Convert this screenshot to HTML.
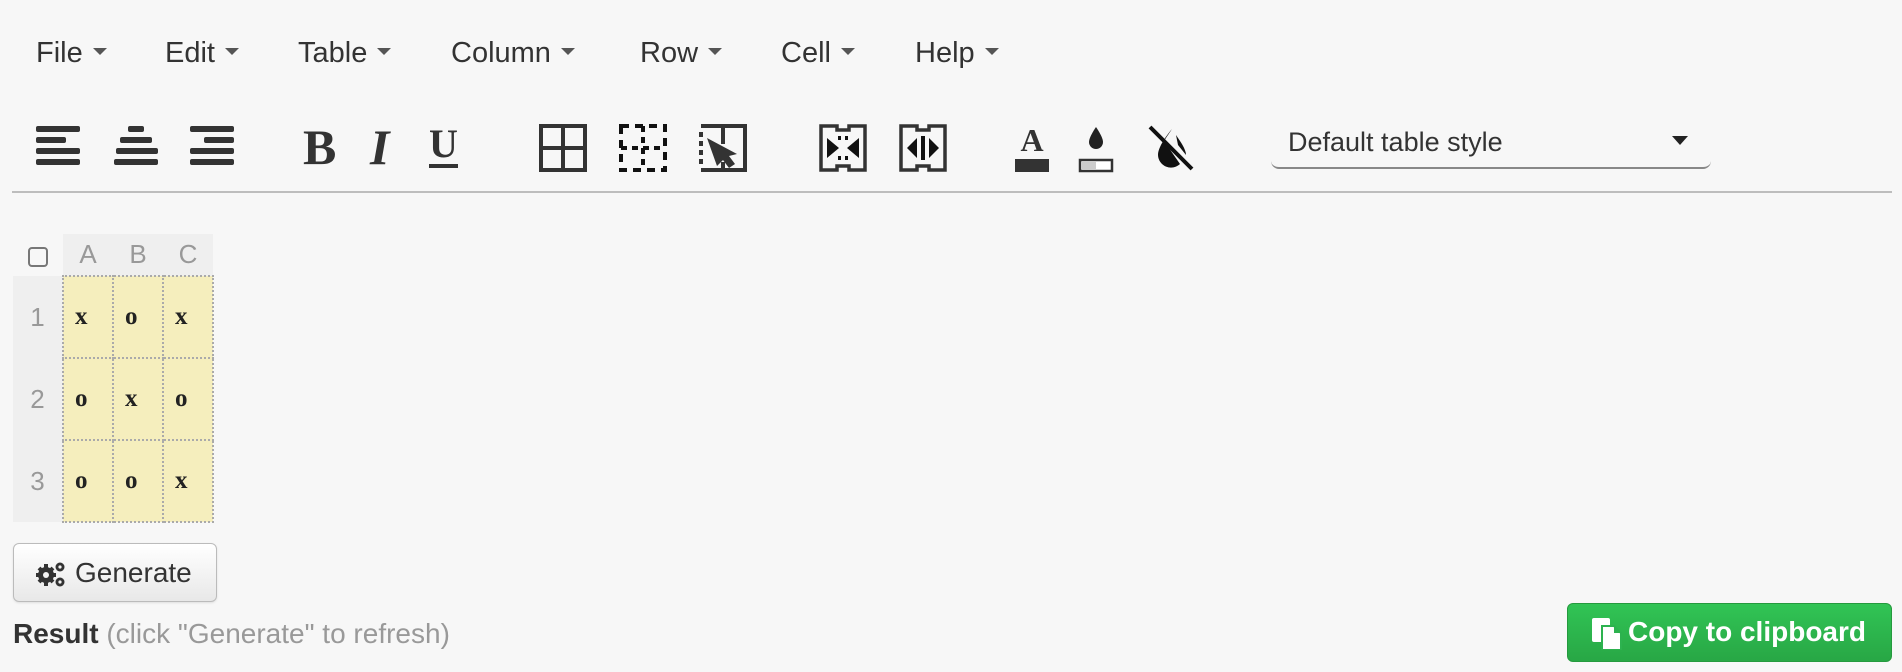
<!DOCTYPE html>
<html><head><meta charset="utf-8"><style>
*{box-sizing:border-box;margin:0;padding:0}
body{width:1902px;height:672px;background:#f7f7f7;font-family:"Liberation Sans",Arial,sans-serif;color:#333;position:relative;overflow:hidden}
.m{position:absolute;top:37px;font-size:29px;color:#333;white-space:nowrap}
.m:after{content:"";display:inline-block;margin-left:10px;vertical-align:middle;border-left:7px solid transparent;border-right:7px solid transparent;border-top:7px solid #555;position:relative;top:-3px}
svg{position:absolute}
.hr{position:absolute;left:12px;top:191px;width:1880px;height:2px;background:#bdbdbd}
.sel{position:absolute;left:1271px;top:119px;width:440px;height:50px;border-bottom:2px solid #888;border-radius:0 0 8px 8px;font-size:27px;padding:8px 0 0 17px;color:#333}
.sel:after{content:"";position:absolute;left:401px;top:17px;border-left:8px solid transparent;border-right:8px solid transparent;border-top:9px solid #222}
table{position:absolute;left:13px;top:234px;border-collapse:collapse}
td{width:50px;height:82px;text-align:left;padding-left:11px;font-family:"Liberation Serif",serif;font-weight:bold;font-size:25px;color:#222;background:#f5eebd;border:2px dotted #aaa}
th{font-weight:normal;color:#999;font-size:26px;background:#efefef}
th.h{height:42px;width:50px}
th.r{width:50px;height:82px}
th.c{background:#f7f7f7}
.btn{position:absolute;left:13px;top:543px;width:204px;height:59px;border:1.5px solid #bbb;border-radius:6px;background:linear-gradient(#fff,#e8e8e8);font-size:28px;color:#333;padding:13px 0 0 61px;box-shadow:0 1px 2px rgba(0,0,0,.1)}
.res{position:absolute;left:13px;top:618px;font-size:28px;color:#999}
.res b{color:#333}
.cp{position:absolute;left:1567px;top:603px;width:325px;height:59px;border-radius:6px;background:linear-gradient(#31c455,#28a745);border:1px solid #259a3e;color:#fff;font-weight:bold;font-size:28px;padding:12px 0 0 60px}
</style></head><body>
<div class="m" style="left:36px">File</div>
<div class="m" style="left:165px">Edit</div>
<div class="m" style="left:298px">Table</div>
<div class="m" style="left:451px">Column</div>
<div class="m" style="left:640px">Row</div>
<div class="m" style="left:781px">Cell</div>
<div class="m" style="left:915px">Help</div>

<svg style="left:36px;top:126px" width="46" height="40" viewBox="0 0 46 40" fill="#333"><rect x="0" y="0" width="44" height="6" rx="2"/><rect x="0" y="11" width="30" height="6" rx="2"/><rect x="0" y="22" width="44" height="6" rx="2"/><rect x="0" y="33" width="44" height="6" rx="2"/></svg>
<svg style="left:114px;top:126px" width="46" height="40" viewBox="0 0 46 40" fill="#333"><rect x="14" y="0" width="16" height="6" rx="2"/><rect x="6" y="11" width="32" height="6" rx="2"/><rect x="2" y="22" width="42" height="6" rx="2"/><rect x="0" y="33" width="44" height="6" rx="2"/></svg>
<svg style="left:190px;top:126px" width="46" height="40" viewBox="0 0 46 40" fill="#333"><rect x="0" y="0" width="44" height="6" rx="2"/><rect x="14" y="11" width="30" height="6" rx="2"/><rect x="0" y="22" width="44" height="6" rx="2"/><rect x="0" y="33" width="44" height="6" rx="2"/></svg>
<div style="position:absolute;left:303px;top:118px;font:bold 50px 'Liberation Serif',serif;color:#333">B</div>
<div style="position:absolute;left:370px;top:118px;font:italic bold 50px 'Liberation Serif',serif;color:#333">I</div>
<div style="position:absolute;left:429px;top:124px;font:bold 40px 'Liberation Serif',serif;color:#333;border-bottom:4px solid #333;line-height:40px">U</div>

<svg style="left:539px;top:124px" width="48" height="48" viewBox="0 0 48 48" fill="none" stroke="#333" stroke-width="4"><rect x="2" y="2" width="44" height="44"/><path d="M24 2V46M2 24H46"/></svg>
<svg style="left:619px;top:124px" width="48" height="48" viewBox="0 0 48 48" fill="none" stroke="#111" stroke-width="4" stroke-dasharray="8 6"><rect x="2" y="2" width="44" height="44"/><path d="M24 2V46M2 24H46" stroke-dasharray="6 5"/></svg>
<svg style="left:699px;top:124px" width="48" height="48" viewBox="0 0 48 48"><path d="M2 2H46V46H2" fill="none" stroke="#333" stroke-width="4"/><path d="M2 8V40" stroke="#333" stroke-width="4" stroke-dasharray="5 4"/><path d="M24 2V20M24 38V46" stroke="#333" stroke-width="4"/><path d="M8 14L38 30L30 32L36 40L30 44L24 36L18 42Z" fill="#333"/></svg>
<svg style="left:819px;top:124px" width="48" height="48" viewBox="0 0 48 48"><path d="M2 2H18V6H30V2H46V46H30V42H18V46H2Z" fill="none" stroke="#333" stroke-width="3.5"/><path d="M8 14L20 24L8 34ZM40 14L28 24L40 34Z" fill="#111"/><rect x="19" y="12" width="3" height="4" fill="#111"/><rect x="26" y="12" width="3" height="4" fill="#111"/><rect x="19" y="32" width="3" height="4" fill="#111"/><rect x="26" y="32" width="3" height="4" fill="#111"/></svg>
<svg style="left:899px;top:124px" width="48" height="48" viewBox="0 0 48 48"><path d="M2 2H18V6H30V2H46V46H30V42H18V46H2Z" fill="none" stroke="#333" stroke-width="3.5"/><path d="M18 14L8 24L18 34ZM30 14L40 24L30 34Z" fill="#111"/><rect x="22" y="12" width="4" height="24" fill="#111"/></svg>

<svg style="left:1014px;top:123px" width="36" height="50" viewBox="0 0 36 50"><text x="18" y="28" text-anchor="middle" font-family="Liberation Serif" font-weight="bold" font-size="32" fill="#333">A</text><rect x="1" y="36" width="34" height="13" fill="#333"/></svg>
<svg style="left:1078px;top:123px" width="36" height="50" viewBox="0 0 36 50"><path d="M18 4C18 4 11 14 11 19A7 7 0 0 0 25 19C25 14 18 4 18 4Z" fill="#222"/><rect x="2" y="37" width="32" height="11" fill="#fff" stroke="#333" stroke-width="2.5"/><rect x="4" y="39" width="14" height="7" fill="#ccc"/></svg>
<svg style="left:1146px;top:123px" width="50" height="50" viewBox="0 0 50 50"><path d="M26 6C26 6 12 22 12 32A13 13 0 0 0 34 41L18 18C22 12 26 6 26 6Z" fill="#111"/><path d="M30 12C34 18 40 26 40 32L32 22Z" fill="#111"/><path d="M4 4L46 46" stroke="#111" stroke-width="4"/></svg>

<div class="sel">Default table style</div>
<div class="hr"></div>

<table>
<tr><th class="h c"><span style="display:inline-block;width:20px;height:20px;border:2px solid #777;border-radius:4px;vertical-align:middle"></span></th><th class="h">A</th><th class="h">B</th><th class="h">C</th></tr>
<tr><th class="r">1</th><td>x</td><td>o</td><td>x</td></tr>
<tr><th class="r">2</th><td>o</td><td>x</td><td>o</td></tr>
<tr><th class="r">3</th><td>o</td><td>o</td><td>x</td></tr>
</table>

<div class="btn"><svg style="left:22px;top:16px" width="30" height="28" viewBox="0 0 30 28" fill="#333"><circle cx="10" cy="15" r="8"/><g stroke="#333" stroke-width="4"><path d="M10 4V26M0 15H20M3 8L17 22M17 8L3 22"/></g><circle cx="10" cy="15" r="3" fill="#f4f4f4"/><circle cx="24" cy="7" r="4.5"/><circle cx="24" cy="22" r="4.5"/><circle cx="24" cy="7" r="1.6" fill="#f4f4f4"/><circle cx="24" cy="22" r="1.6" fill="#f4f4f4"/></svg>Generate</div>
<div class="res"><b>Result</b> (click "Generate" to refresh)</div>
<div class="cp"><svg style="left:24px;top:14px" width="30" height="32" viewBox="0 0 30 32" fill="#fff"><rect x="0" y="0" width="18" height="24" rx="2"/><path d="M10 8H22L29 15V32H10Z" stroke="#2db24f" stroke-width="2"/><path d="M22 8V15H29" fill="#2db24f"/></svg>Copy to clipboard</div>
</body></html>
